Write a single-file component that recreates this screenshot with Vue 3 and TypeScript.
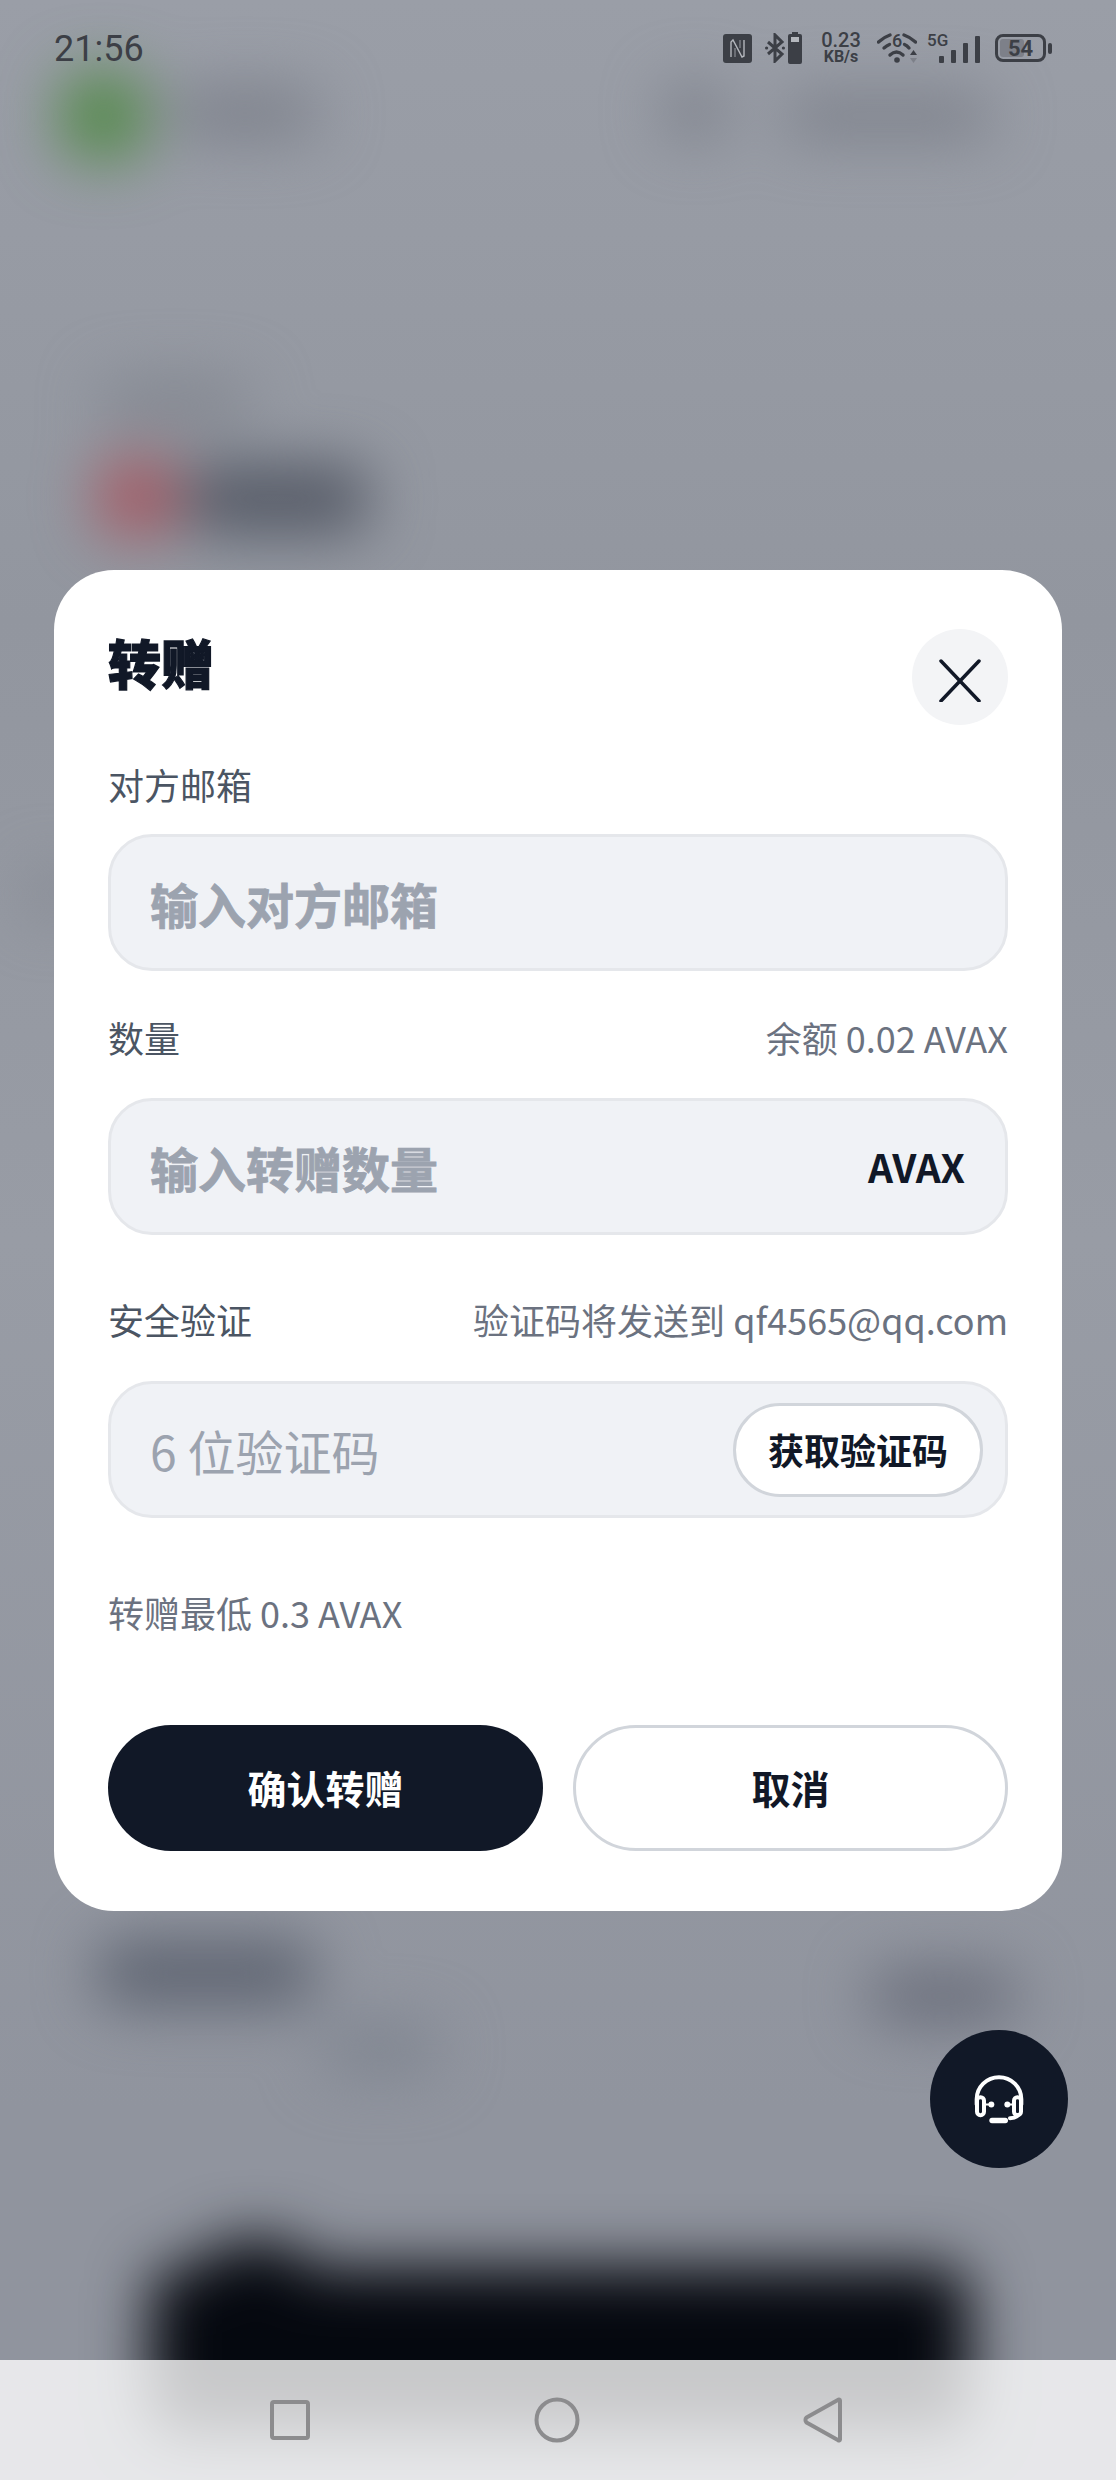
<template>
  <div class="screen">
    <div class="backdrop">
      <span v-for="b in blobs" :key="b.id" class="blob" :style="blobStyle(b)"></span>
    </div>

    <div class="statusbar">
      <span class="time">21:56</span>
      <div class="status-icons">
        <svg class="ic-nfc" width="29" height="29" viewBox="0 0 29 29">
          <rect width="29" height="29" rx="3" fill="#3c3f46" />
          <path d="M8 23V8l2-2 9 17 2-1V6" fill="none" stroke="#b4b7bd" stroke-width="1.400" />
          <path d="M12 23V14M17 6v8" fill="none" stroke="#8b8e95" stroke-width="1.200" />
        </svg>
        <svg class="ic-bt" width="20" height="30" viewBox="0 0 20 30">
          <path d="M3 9l14 12-7 7V2l7 7L3 21" fill="none" stroke="#3c3f46" stroke-width="3" />
          <circle cx="1.600" cy="15" r="1.600" fill="#3c3f46" />
          <circle cx="18.400" cy="15" r="1.600" fill="#3c3f46" />
        </svg>
        <svg class="ic-cell" width="14" height="32" viewBox="0 0 14 32">
          <path d="M4 0h6v2h2a2 2 0 0 1 2 2v26a2 2 0 0 1-2 2H2a2 2 0 0 1-2-2V4a2 2 0 0 1 2-2h2z" fill="#3c3f46" />
          <rect x="3" y="5" width="8" height="5" fill="#b4b7bd" />
        </svg>
        <div class="speed">
          <span class="speed-num">0.23</span>
          <span class="speed-unit">KB/s</span>
        </div>
        <div class="wifi">
          <svg width="40" height="32" viewBox="0 0 40 32">
            <g fill="none" stroke="#3c3f46" stroke-width="3.400" stroke-linecap="round">
              <path d="M1.500 10Q7 5 13 3M27 3Q33 5 38.500 10" />
              <path d="M7 16Q10 13.500 12.500 12.500M27.500 12.500Q30 13.500 32 16" />
              <path d="M13 23Q19.500 17 26 23" />
            </g>
            <circle cx="20" cy="28" r="2.800" fill="#3c3f46" />
            <path d="M33 23h7l-3.500-5z" fill="#3c3f46" />
            <path d="M33 26h7l-3.500 5z" fill="#7d8089" />
          </svg>
          <span class="wifi-six">6</span>
        </div>
        <div class="net">
          <span class="net-label">5G</span>
          <svg width="41" height="27" viewBox="0 0 41 27">
            <rect x="0" y="20" width="5" height="7" rx="1" fill="#3c3f46" />
            <rect x="12" y="14" width="5" height="13" rx="1" fill="#3c3f46" />
            <rect x="24" y="7" width="5" height="20" rx="1" fill="#3c3f46" />
            <rect x="36" y="0" width="5" height="27" rx="1" fill="#3c3f46" />
          </svg>
        </div>
        <div class="battery">
          <div class="battery-body">
            <span class="battery-fill" :style="{ width: battery + '%' }"></span>
            <span class="battery-num">{{ battery }}</span>
          </div>
          <span class="battery-nub"></span>
        </div>
      </div>
    </div>

    <section class="modal">
      <div class="modal-head">
        <h2 class="title">转赠</h2>
        <button class="close" aria-label="close">
          <svg width="44" height="44" viewBox="0 0 44 44">
            <path d="M3 3l38 40M41 3L3 43" fill="none" stroke="#111827" stroke-width="3.500" stroke-linecap="round" />
          </svg>
        </button>
      </div>

      <div class="label-row email-label">
        <span class="label">对方邮箱</span>
      </div>
      <div class="field">
        <span class="placeholder strong">输入对方邮箱</span>
      </div>

      <div class="label-row amount-label">
        <span class="label">数量</span>
        <span class="hint">余额 0.02 AVAX</span>
      </div>
      <div class="field">
        <span class="placeholder strong">输入转赠数量</span>
        <span class="unit">AVAX</span>
      </div>

      <div class="label-row code-label">
        <span class="label">安全验证</span>
        <span class="hint">验证码将发送到 qf4565@qq.com</span>
      </div>
      <div class="field code-field">
        <span class="placeholder">6 位验证码</span>
        <button class="send">获取验证码</button>
      </div>

      <p class="note">转赠最低 0.3 AVAX</p>

      <div class="actions">
        <button class="btn primary">确认转赠</button>
        <button class="btn ghost">取消</button>
      </div>
    </section>

    <button class="fab" aria-label="support">
      <svg width="50" height="49" viewBox="0 0 150 146">
        <g fill="none" stroke="#fff" stroke-width="12" stroke-linecap="round">
          <path d="M8 88V72a67 66 0 0 1 134 0v16" />
          <rect x="9" y="66" width="21" height="54" rx="10" />
          <rect x="120" y="66" width="21" height="54" rx="10" />
          <path d="M32 88h12M118 88h-12" stroke-width="6" />
          <path d="M132 120q-4 8-24 9" />
          <path d="M54 136h40" stroke-width="16" />
        </g>
        <circle cx="52" cy="88" r="9" fill="#fff" />
        <circle cx="100" cy="88" r="9" fill="#fff" />
      </svg>
    </button>

    <nav class="navbar">
      <svg width="40" height="40" viewBox="0 0 40 40">
        <rect x="2" y="2" width="36" height="36" rx="2" fill="none" stroke="#8c8c8e" stroke-width="4" />
      </svg>
      <svg width="46" height="46" viewBox="0 0 46 46">
        <circle cx="23" cy="23" r="20.500" fill="none" stroke="#8c8c8e" stroke-width="4" />
      </svg>
      <svg width="40" height="46" viewBox="0 0 40 46">
        <path d="M37 3.500V42.500a1 1 0 0 1-1.700.700L3.500 25.500a3.500 3.500 0 0 1 0-5L35.300 2.800A1 1 0 0 1 37 3.500z" fill="none" stroke="#8c8c8e" stroke-width="4" stroke-linejoin="round" />
      </svg>
    </nav>
  </div>
</template>

<script setup lang="ts">
interface Blob {
  id: string
  x: number
  y: number
  w: number
  h: number
  color: string
}

const battery = 54

// smeared shapes of the page behind the sheet
const blobs: Blob[] = [
  { id: 'logo', x: 60, y: 72, w: 86, h: 88, color: '#558a4c' },
  { id: 'brand', x: 170, y: 88, w: 150, h: 50, color: '#7c808a' },
  { id: 'lang', x: 664, y: 84, w: 62, h: 54, color: '#797d87' },
  { id: 'user', x: 782, y: 96, w: 210, h: 40, color: '#797d87' },
  { id: 'caption', x: 100, y: 380, w: 150, h: 46, color: '#82868f' },
  { id: 'coin', x: 96, y: 458, w: 82, h: 78, color: '#a45a64' },
  { id: 'amount', x: 184, y: 464, w: 186, h: 70, color: '#555a66' },
  { id: 'side', x: 26, y: 870, w: 56, h: 46, color: '#858992' },
  { id: 'row-left', x: 96, y: 1940, w: 220, h: 66, color: '#5e6471' },
  { id: 'row-right', x: 868, y: 1970, w: 150, h: 52, color: '#686c79' },
  { id: 'row-sub', x: 320, y: 2024, w: 120, h: 50, color: '#7e848f' },
  { id: 'cta-tab', x: 206, y: 2240, w: 100, h: 50, color: '#0a0d14' },
  { id: 'cta', x: 150, y: 2266, w: 820, h: 166, color: '#05080f' },
]

const blobStyle = (b: Blob) => ({
  left: b.x + 'px',
  top: b.y + 'px',
  width: b.w + 'px',
  height: b.h + 'px',
  background: b.color,
})
</script>

<style>
body {
  margin: 0;
}
</style>

<style scoped>
.screen {
  position: relative;
  display: flex;
  flex-direction: column;
  width: 1116px;
  height: 2480px;
  overflow: hidden;
  background: linear-gradient(#9a9ea7 0%, #92969f 25%, #989ca5 50%, #90949e 85%);
  font-family: "Noto Sans CJK SC", "Noto Sans", sans-serif;
  color: #111827;
}
.backdrop {
  position: absolute;
  inset: 0;
  filter: blur(30px);
}
.blob {
  position: absolute;
  border-radius: 28px;
}

.statusbar {
  position: relative;
  display: flex;
  justify-content: space-between;
  align-items: center;
  height: 96px;
  padding: 0 64px 0 54px;
  box-sizing: border-box;
}
.time {
  margin-top: 2px;
  font-family: Roboto, sans-serif;
  font-size: 36px;
  color: #3c3f46;
}
.status-icons {
  display: flex;
  align-items: center;
  height: 32px;
  color: #3c3f46;
}
.ic-bt {
  margin-left: 13px;
}
.ic-cell {
  margin-left: 3px;
}
.speed {
  display: flex;
  flex-direction: column;
  align-items: center;
  margin-left: 19px;
  width: 40px;
  font-family: Roboto, sans-serif;
}
.speed-num {
  font-size: 20px;
  line-height: 18px;
  font-weight: 500;
}
.speed-unit {
  font-size: 16px;
  line-height: 16px;
  font-weight: 700;
}
.wifi {
  position: relative;
  display: flex;
  margin-left: 16px;
}
.wifi-six {
  position: absolute;
  left: 15px;
  top: 0;
  font-family: Roboto, sans-serif;
  font-size: 18px;
  line-height: 18px;
  font-weight: 500;
}
.net {
  position: relative;
  display: flex;
  justify-content: flex-end;
  align-items: flex-end;
  width: 53px;
  height: 30px;
  margin-left: 10px;
}
.net-label {
  position: absolute;
  left: 0;
  top: -1px;
  font-family: Roboto, sans-serif;
  font-size: 17px;
  line-height: 17px;
  font-weight: 500;
}
.battery {
  display: flex;
  align-items: center;
  margin-left: 15px;
}
.battery-body {
  position: relative;
  display: flex;
  justify-content: center;
  align-items: center;
  width: 51px;
  height: 28px;
  box-sizing: border-box;
  border: 3px solid #3c3f46;
  border-radius: 8px;
}
.battery-fill {
  position: absolute;
  left: 2px;
  top: 2px;
  bottom: 2px;
  border-radius: 3px;
  background: #7d8089;
}
.battery-num {
  position: relative;
  font-family: Roboto, sans-serif;
  font-size: 22px;
  font-weight: 700;
}
.battery-nub {
  width: 4px;
  height: 11px;
  margin-left: 2px;
  border-radius: 2px;
  background: #3c3f46;
}

.modal {
  position: relative;
  width: 1008px;
  margin: 474px 0 0 54px;
  padding: 59px 54px 60px;
  box-sizing: border-box;
  border-radius: 60px;
  background: #fff;
}
.modal-head {
  display: flex;
  justify-content: space-between;
  align-items: flex-start;
  height: 96px;
}
.title {
  margin: 0;
  font-size: 53px;
  line-height: 66px;
  font-weight: 900;
  -webkit-text-stroke: 1.2px #111827;
  color: #111827;
}
.close {
  display: flex;
  justify-content: center;
  align-items: center;
  width: 96px;
  height: 96px;
  padding: 5px 0 0;
  box-sizing: border-box;
  border: none;
  border-radius: 50%;
  background: #f3f4f6;
}
.label-row {
  display: flex;
  justify-content: space-between;
  align-items: center;
  height: 50px;
}
.email-label {
  margin: 34px 0 25px;
}
.amount-label {
  margin: 41px 0 36px;
}
.code-label {
  margin: 59px 0 37px;
}
.label {
  font-size: 36px;
  color: #4b5563;
}
.hint {
  font-size: 36px;
  color: #6b7280;
}
.field {
  display: flex;
  justify-content: space-between;
  align-items: center;
  height: 137px;
  padding: 0 40px 0 39px;
  box-sizing: border-box;
  border: 3px solid #e5e7eb;
  border-radius: 44px;
  background: #f0f2f6;
}
.code-field {
  padding-right: 22px;
}
.placeholder {
  font-size: 48px;
  color: #9ca3af;
}
.placeholder.strong {
  font-weight: 700;
  -webkit-text-stroke: 0.8px #9ca3af;
}
.unit {
  margin-bottom: 2px;
  font-size: 39px;
  font-weight: 700;
  color: #111827;
}
.send {
  width: 250px;
  height: 94px;
  padding: 0 0 2px;
  box-sizing: border-box;
  border: 3px solid #d1d5db;
  border-radius: 47px;
  background: #fff;
  font-family: inherit;
  font-size: 36px;
  font-weight: 700;
  color: #111827;
}
.note {
  margin: 69px 0 88px;
  font-size: 36px;
  line-height: 50px;
  color: #6b7280;
}
.actions {
  display: grid;
  grid-template-columns: 1fr 1fr;
  gap: 30px;
}
.btn {
  height: 126px;
  padding: 0 0 2px;
  box-sizing: border-box;
  border-radius: 63px;
  font-family: inherit;
  font-size: 39px;
  font-weight: 700;
}
.primary {
  border: none;
  background: #111827;
  color: #fff;
}
.ghost {
  border: 3px solid #d1d5db;
  background: #fff;
  color: #111827;
}

.fab {
  position: absolute;
  left: 930px;
  top: 2030px;
  display: flex;
  justify-content: center;
  align-items: center;
  width: 138px;
  height: 138px;
  padding: 0;
  border: none;
  border-radius: 50%;
  background: #111827;
}

.navbar {
  position: relative;
  display: flex;
  justify-content: space-between;
  align-items: center;
  margin-top: auto;
  height: 120px;
  padding: 0 273px 0 270px;
  box-sizing: border-box;
  background: rgba(255, 255, 255, 0.78);
}
</style>
